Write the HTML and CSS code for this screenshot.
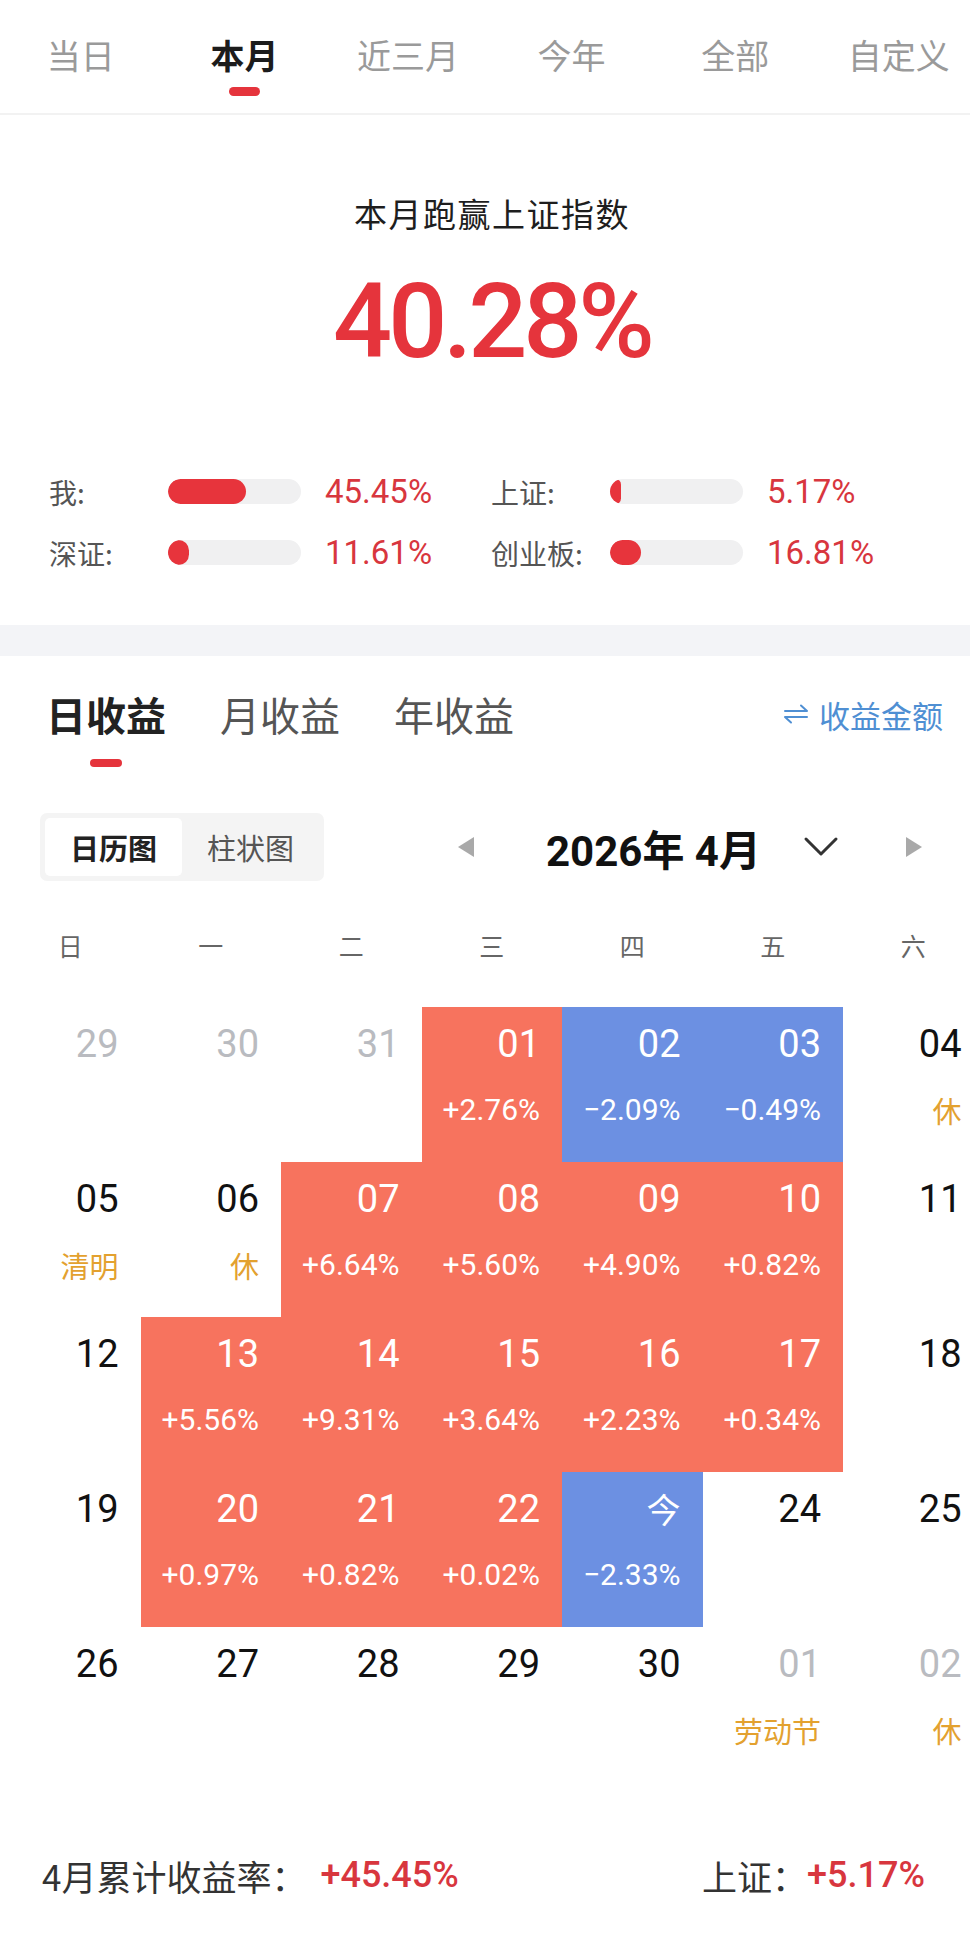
FILE: index.html
```html
<!DOCTYPE html>
<html lang="zh-CN">
<head>
<meta charset="utf-8">
<title>收益</title>
<link rel="stylesheet" href="styles.css">
</head>
<body>
<div class="page">
  <nav class="period-tabs">
    <span class="ptab">当日</span>
    <span class="ptab active">本月</span>
    <span class="ptab">近三月</span>
    <span class="ptab">今年</span>
    <span class="ptab">全部</span>
    <span class="ptab">自定义</span>
  </nav>

  <section class="hero">
    <h1 class="hero-title">本月跑赢上证指数</h1>
    <div class="hero-value">40.28%</div>
    <div class="stats">
      <div class="stat"><span class="stat-label">我:</span><span class="bar"><span class="fill" style="width:59%"></span></span><span class="stat-val">45.45%</span></div>
      <div class="stat"><span class="stat-label">上证:</span><span class="bar"><span class="fill" style="width:8%"></span></span><span class="stat-val">5.17%</span></div>
      <div class="stat"><span class="stat-label">深证:</span><span class="bar"><span class="fill" style="width:16%"></span></span><span class="stat-val">11.61%</span></div>
      <div class="stat"><span class="stat-label">创业板:</span><span class="bar"><span class="fill" style="width:23%"></span></span><span class="stat-val">16.81%</span></div>
    </div>
  </section>

  <div class="band"></div>

  <section class="earnings">
    <div class="sub-tabs">
      <span class="stab active">日收益</span>
      <span class="stab">月收益</span>
      <span class="stab">年收益</span>
      <span class="switch">
        <svg class="switch-icon" width="26" height="24" viewBox="0 0 26 24"><path d="M2 9H24L18 3.5M24 15H2L8 20.5" fill="none" stroke="#4f8fd3" stroke-width="2" stroke-linecap="round" stroke-linejoin="round"/></svg>
        收益金额
      </span>
    </div>

    <div class="toolbar">
      <div class="segment">
        <span class="seg active">日历图</span>
        <span class="seg">柱状图</span>
      </div>
      <div class="month-nav">
        <svg class="tri" width="18" height="22" viewBox="0 0 18 22"><polygon points="17,1 17,21 1,11" fill="#a9a9a9"/></svg>
        <span class="month-title">2026年 4月</span>
        <svg class="chev" width="36" height="22" viewBox="0 0 36 22"><polyline points="3,3 18,18 33,3" fill="none" stroke="#333" stroke-width="3" stroke-linecap="round" stroke-linejoin="round"/></svg>
        <svg class="tri tri-r" width="18" height="22" viewBox="0 0 18 22"><polygon points="1,1 1,21 17,11" fill="#a9a9a9"/></svg>
      </div>
    </div>

    <div class="weekdays">
      <span>日</span><span>一</span><span>二</span><span>三</span><span>四</span><span>五</span><span>六</span>
    </div>
    <div class="cal">
      <div class="day muted"><span class="num">29</span></div>
      <div class="day muted"><span class="num">30</span></div>
      <div class="day muted"><span class="num">31</span></div>
      <div class="day up"><span class="num">01</span><span class="pct">+2.76%</span></div>
      <div class="day down"><span class="num">02</span><span class="pct">−2.09%</span></div>
      <div class="day down"><span class="num">03</span><span class="pct">−0.49%</span></div>
      <div class="day"><span class="num">04</span><span class="hol">休</span></div>

      <div class="day"><span class="num">05</span><span class="hol">清明</span></div>
      <div class="day"><span class="num">06</span><span class="hol">休</span></div>
      <div class="day up"><span class="num">07</span><span class="pct">+6.64%</span></div>
      <div class="day up"><span class="num">08</span><span class="pct">+5.60%</span></div>
      <div class="day up"><span class="num">09</span><span class="pct">+4.90%</span></div>
      <div class="day up"><span class="num">10</span><span class="pct">+0.82%</span></div>
      <div class="day"><span class="num">11</span></div>

      <div class="day"><span class="num">12</span></div>
      <div class="day up"><span class="num">13</span><span class="pct">+5.56%</span></div>
      <div class="day up"><span class="num">14</span><span class="pct">+9.31%</span></div>
      <div class="day up"><span class="num">15</span><span class="pct">+3.64%</span></div>
      <div class="day up"><span class="num">16</span><span class="pct">+2.23%</span></div>
      <div class="day up"><span class="num">17</span><span class="pct">+0.34%</span></div>
      <div class="day"><span class="num">18</span></div>

      <div class="day"><span class="num">19</span></div>
      <div class="day up"><span class="num">20</span><span class="pct">+0.97%</span></div>
      <div class="day up"><span class="num">21</span><span class="pct">+0.82%</span></div>
      <div class="day up"><span class="num">22</span><span class="pct">+0.02%</span></div>
      <div class="day down"><span class="num today">今</span><span class="pct">−2.33%</span></div>
      <div class="day"><span class="num">24</span></div>
      <div class="day"><span class="num">25</span></div>

      <div class="day"><span class="num">26</span></div>
      <div class="day"><span class="num">27</span></div>
      <div class="day"><span class="num">28</span></div>
      <div class="day"><span class="num">29</span></div>
      <div class="day"><span class="num">30</span></div>
      <div class="day muted"><span class="num">01</span><span class="hol">劳动节</span></div>
      <div class="day muted"><span class="num">02</span><span class="hol">休</span></div>
    </div>

    <div class="summary">
      <div class="sum-item"><span class="sum-label">4月累计收益率：</span><span class="sum-val sum-val-main">+45.45%</span></div>
      <div class="sum-item"><span class="sum-label">上证：</span><span class="sum-val">+5.17%</span></div>
    </div>
  </section>
</div>
</body>
</html>
```

FILE: styles.css
```css
* { box-sizing: border-box; }
html, body { margin: 0; padding: 0; background: #fff; }
body {
  width: 970px;
  overflow: hidden;
  font-family: "Noto Sans CJK SC", "Noto Sans", sans-serif;
  color: #222;
}
/* the app layout is slightly wider than the captured viewport */
.page { width: 984px; }

/* period tabs */
.period-tabs {
  height: 115px;
  border-bottom: 2px solid #f2f2f2;
  display: grid;
  grid-template-columns: repeat(6, 163.6px);
  align-items: start;
  padding-top: 35px;
  margin-left: -1px;
}
.ptab {
  position: relative;
  justify-self: center;
  font-size: 34px;
  line-height: 40px;
  color: #9a9a9a;
}
.ptab.active { color: #1c1c1c; font-weight: 700; }
.ptab.active::after {
  content: "";
  position: absolute;
  left: 50%;
  top: 52px;
  width: 31px;
  height: 9px;
  margin-left: -15px;
  border-radius: 5px;
  background: #e5343c;
}

/* hero */
.hero { padding: 78px 0 42px; }
.hero-title {
  margin: 0;
  text-align: center;
  font-size: 33px;
  line-height: 40px;
  font-weight: 400;
  letter-spacing: 1.5px;
  color: #1e1e1e;
}
.hero-value {
  margin-top: 37px;
  text-align: center;
  font-family: Roboto, "Noto Sans", sans-serif;
  font-size: 104px;
  line-height: 104px;
  font-weight: 500;
  letter-spacing: -4px;
  color: #e5343c;
}
.stats {
  margin-top: 87px;
  padding-left: 49px;
  display: grid;
  grid-template-columns: 442px 442px;
}
.stat {
  height: 61px;
  display: flex;
  align-items: center;
}
.stat-label {
  width: 119px;
  font-size: 28px;
  color: #555;
}
.bar {
  width: 133px;
  height: 25px;
  border-radius: 13px;
  background: #f0f0f1;
  overflow: hidden;
  display: flex;
}
.fill {
  height: 100%;
  border-radius: 13px;
  background: #e7343c;
  min-width: 10px;
}
.stat-val {
  margin-left: 24px;
  font-family: Roboto, "Noto Sans", sans-serif;
  font-size: 33px;
  color: #d8363e;
}

.band { height: 31px; background: #f3f4f7; }

/* earnings */
.earnings { padding-top: 34px; }
.sub-tabs {
  display: flex;
  align-items: center;
  padding: 0 41px 0 46px;
  height: 48px;
}
.stab {
  position: relative;
  font-size: 40px;
  line-height: 48px;
  color: #555;
  margin-right: 54px;
}
.stab.active { color: #222; font-weight: 700; }
.stab.active::after {
  content: "";
  position: absolute;
  left: 50%;
  top: 69px;
  width: 32px;
  height: 8px;
  margin-left: -16px;
  border-radius: 4px;
  background: #e5343c;
}
.switch {
  margin-left: auto;
  display: flex;
  align-items: center;
  gap: 10px;
  font-size: 31px;
  color: #4f8fd3;
}

.toolbar {
  margin-top: 75px;
  display: flex;
  align-items: center;
  padding-left: 40px;
  height: 68px;
}
.segment {
  display: flex;
  padding: 5px;
  background: #f4f4f4;
  border-radius: 7px;
}
.seg {
  width: 137px;
  height: 58px;
  display: flex;
  align-items: center;
  justify-content: center;
  font-size: 29px;
  color: #555;
  border-radius: 5px;
}
.seg.active { background: #fff; color: #222; font-weight: 700; }
.month-nav {
  display: flex;
  align-items: center;
  margin-left: 133px;
}
.month-title {
  margin-left: 71px;
  font-family: Roboto, "Noto Sans CJK SC", sans-serif;
  font-size: 42px;
  font-weight: 700;
  color: #111;
}
.chev { margin-left: 42px; }
.tri-r { margin-left: 66px; }

/* calendar */
.weekdays {
  margin-top: 49px;
  display: grid;
  grid-template-columns: repeat(7, 140.5px);
  font-size: 25px;
  line-height: 30px;
  color: #666;
  text-align: center;
}
.cal {
  margin-top: 47px;
  display: grid;
  grid-template-columns: repeat(7, 140.5px);
  grid-auto-rows: 155px;
}
.day {
  display: flex;
  flex-direction: column;
  align-items: flex-end;
  padding: 18px 22px 0 0;
  color: #111;
  font-family: Roboto, "Noto Sans CJK SC", sans-serif;
}
.day.up { background: #f7735e; color: #fff; }
.day.down { background: #6c90e2; color: #fff; }
.day.muted .num { color: #b9bbc0; }
.num { font-size: 38px; line-height: 38px; }
.num.today { font-family: "Noto Sans CJK SC", sans-serif; font-size: 34px; }
.pct { margin-top: 32px; font-size: 30px; line-height: 30px; }
.hol {
  margin-top: 32px;
  font-family: "Noto Sans CJK SC", sans-serif;
  font-size: 29px;
  line-height: 30px;
  color: #e3a12f;
}

/* summary */
.summary {
  margin-top: 73px;
  display: flex;
  justify-content: space-between;
  padding: 0 59px 0 42px;
  height: 60px;
}
.sum-item { display: flex; align-items: center; height: 40px; }
.sum-label { font-size: 35px; color: #333; }
.sum-val {
  font-family: Roboto, "Noto Sans", sans-serif;
  font-size: 36px;
  font-weight: 500;
  color: #d8363e;
}
.sum-val-main { margin-left: 14px; }
```
